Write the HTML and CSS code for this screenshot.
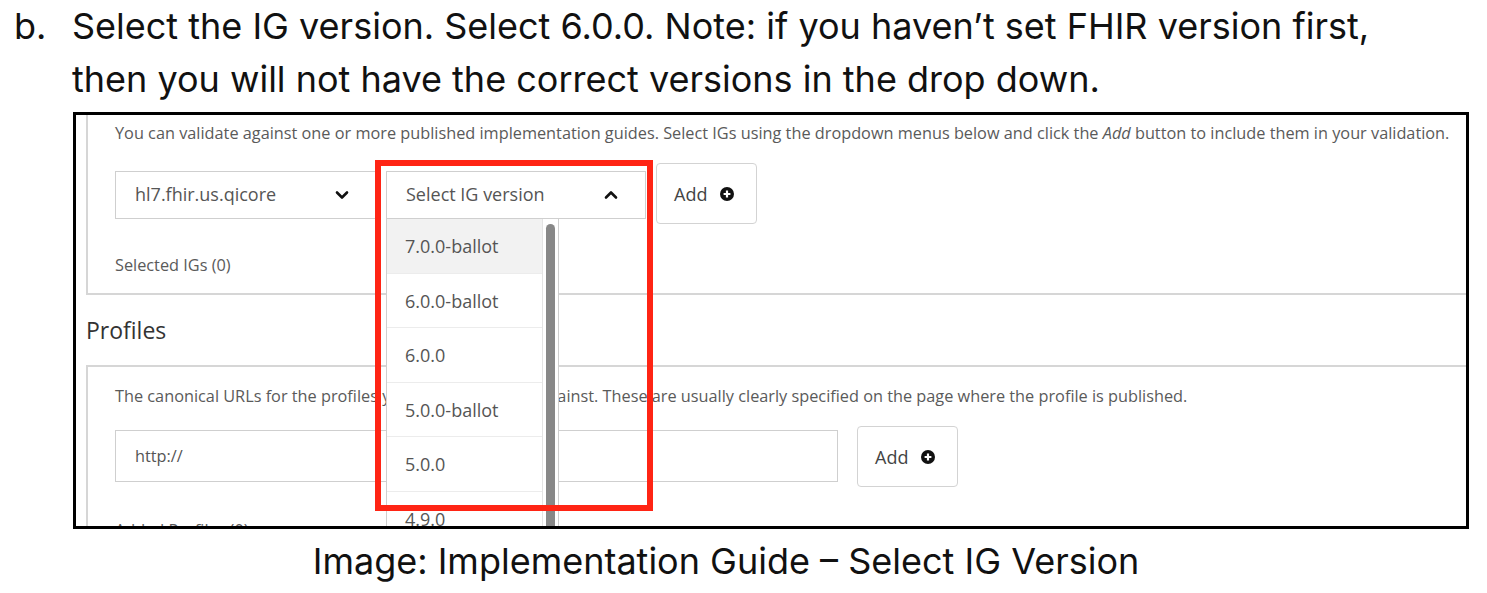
FILE: index.html
```html
<!DOCTYPE html>
<html lang="en">
<head>
<meta charset="utf-8">
<title>Select IG Version</title>
<link rel="stylesheet" href="styles.css">
</head>
<body>
<div class="doc">
  <div class="step">
    <span class="marker">b.</span>
    <p class="step-text">Select the IG version. Select 6.0.0. Note: if you haven’t set FHIR version first,<br>then you will not have the correct versions in the drop down.</p>
  </div>

  <div class="shot">
    <div class="app">
      <section class="card card-top">
        <p class="hint">You can validate against one or more published implementation guides. Select IGs using the dropdown menus below and click the <em>Add</em> button to include them in your validation.</p>
        <div class="row">
          <div class="select select-ig">
            <span>hl7.fhir.us.qicore</span>
            <svg class="chev" viewBox="0 0 14 10" width="14" height="10"><polyline points="2,2.5 7,7.5 12,2.5" fill="none" stroke="#111" stroke-width="2.6" stroke-linecap="round" stroke-linejoin="round"/></svg>
          </div>
          <div class="select select-ver">
            <span>Select IG version</span>
            <svg class="chev" viewBox="0 0 14 10" width="14" height="10"><polyline points="2,7.5 7,2.5 12,7.5" fill="none" stroke="#111" stroke-width="2.6" stroke-linecap="round" stroke-linejoin="round"/></svg>
          </div>
          <button class="btn-add" type="button">Add
            <svg class="plus" viewBox="0 0 14 14" width="14" height="14"><circle cx="7" cy="7" r="7" fill="#111"/><path d="M7 3.6v6.8M3.6 7h6.8" stroke="#fff" stroke-width="2.2"/></svg>
          </button>
        </div>
        <p class="hint selected">Selected IGs (0)</p>
      </section>

      <h2 class="section-title">Profiles</h2>

      <section class="card card-profiles">
        <p class="hint">The canonical URLs for the profiles you want to validate against. These are usually clearly specified on the page where the profile is published.</p>
        <div class="row row-profiles">
          <div class="input">http://</div>
          <button class="btn-add" type="button">Add
            <svg class="plus" viewBox="0 0 14 14" width="14" height="14"><circle cx="7" cy="7" r="7" fill="#111"/><path d="M7 3.6v6.8M3.6 7h6.8" stroke="#fff" stroke-width="2.2"/></svg>
          </button>
        </div>
        <p class="hint added">Added Profiles (0)</p>
      </section>
    </div>

    <div class="dropdown">
      <ul class="dd-items">
        <li class="active">7.0.0-ballot</li>
        <li>6.0.0-ballot</li>
        <li>6.0.0</li>
        <li>5.0.0-ballot</li>
        <li>5.0.0</li>
        <li>4.9.0</li>
      </ul>
      <div class="dd-track"><div class="dd-thumb"></div></div>
    </div>

    <div class="highlight"></div>
  </div>

  <p class="caption">Image: Implementation Guide – Select IG Version</p>
</div>
</body>
</html>
```

FILE: styles.css
```css
* { box-sizing: border-box; }

html, body {
  margin: 0;
  padding: 0;
  background: #ffffff;
}

.doc {
  width: 1487px;
  height: 593px;
  overflow: hidden;
  font-family: "Inter", "Liberation Sans", sans-serif;
  color: #111;
}

.step {
  display: flex;
  align-items: flex-start;
  padding-left: 14px;
}

.marker {
  width: 58px;
  font-size: 36px;
  line-height: 53px;
}

.step-text {
  margin: 0;
  font-size: 36px;
  line-height: 53px;
}

/* screenshot frame */
.shot {
  position: relative;
  margin: 6px 0 0 73px;
  width: 1396px;
  height: 417px;
  border: 3px solid #000;
  overflow: hidden;
  font-family: "Open Sans", "Liberation Sans", sans-serif;
  color: #555;
}

.app {
  padding-left: 10px;
}

.card {
  border: 2px solid #d6d6d6;
  margin-right: -60px;
  padding-left: 27px;
}

.card-top {
  border-top: none;
  padding-top: 7px;
  padding-bottom: 17px;
}

.hint {
  margin: 0;
  font-size: 16.3px;
  line-height: 22px;
  color: #5a5a5a;
}

.row {
  display: flex;
  align-items: flex-start;
  margin-top: 19px;
}

.select {
  display: flex;
  align-items: center;
  justify-content: space-between;
  height: 48px;
  margin-top: 8px;
  border: 1px solid #cfcfcf;
  font-size: 18px;
  color: #555;
  padding: 0 27px 0 19px;
  background: #fff;
}

.select span { margin-top: -2px; }

.select-ig { width: 262px; margin-right: 9px; }
.select-ver { width: 260px; margin-right: 10px; }

.btn-add {
  display: flex;
  align-items: center;
  gap: 13px;
  width: 101px;
  height: 61px;
  padding: 0 0 0 17px;
  border: 1px solid #d3d3d3;
  border-radius: 4px;
  background: #fff;
  font-family: "Open Sans", "Liberation Sans", sans-serif;
  font-size: 18px;
  color: #444;
}

.selected {
  margin-top: 30px;
}

.section-title {
  margin: 20px 0 0;
  font-size: 23px;
  line-height: 30px;
  font-weight: 400;
  color: #333;
}

.card-profiles {
  margin-top: 20px;
  padding-top: 18px;
  height: 200px;
}

.row-profiles {
  gap: 19px;
}

.input {
  width: 723px;
  height: 52px;
  margin-top: 4px;
  border: 1px solid #cfcfcf;
  padding-left: 19px;
  font-size: 16.3px;
  line-height: 50px;
  color: #555;
}

.added {
  margin-top: 32px;
}

/* open dropdown menu */
.dropdown {
  position: absolute;
  left: 310px;
  top: 103px;
  width: 173px;
  height: 320px;
  display: flex;
  background: #fff;
  border: 1px solid #cfcfcf;
}

.dd-items {
  list-style: none;
  margin: 0;
  padding: 0;
  width: 155px;
}

.dd-items li {
  height: 54.5px;
  padding-left: 18px;
  border-bottom: 1px solid #ececec;
  font-size: 18px;
  line-height: 54px;
  color: #555;
}

.dd-items li.active {
  background: #f2f2f2;
}

.dd-track {
  flex: 1;
  border-left: 1px solid #e4e4e4;
  padding: 5px 0 0 3px;
}

.dd-thumb {
  width: 9px;
  height: 400px;
  border-radius: 5px;
  background: #888;
}

/* red annotation box */
.highlight {
  position: absolute;
  left: 299px;
  top: 45px;
  width: 278px;
  height: 351px;
  border: 6px solid #ff2414;
}

.caption {
  margin: 12px 0 0 72px;
  width: 1308px;
  text-align: center;
  font-size: 36px;
  line-height: 40px;
}
```
